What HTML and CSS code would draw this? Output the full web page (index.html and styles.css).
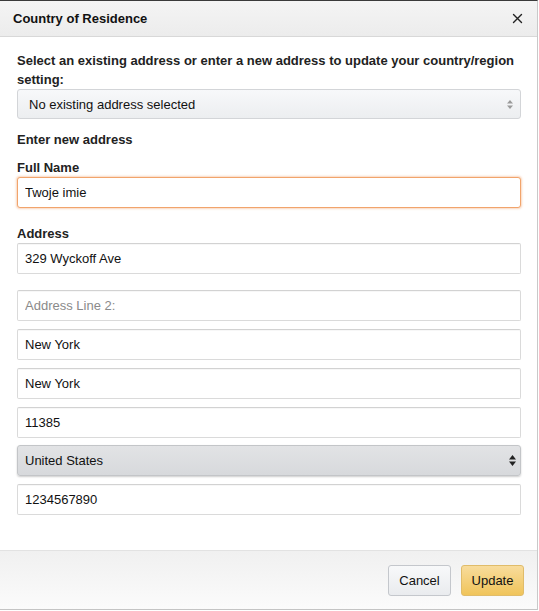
FILE: index.html
```html
<!DOCTYPE html>
<html lang="en">
<head>
    <meta charset="UTF-8">
    <meta name="viewport" content="width=device-width, initial-scale=1.0">
    <title>Country of Residence</title>
    <link rel="stylesheet" href="styles.css">
</head>
<body>
    <div class="dialog">
        <header class="dialog-header">
            <h1>Country of Residence</h1>
            <button type="button" class="close" aria-label="Close">
                <svg width="11" height="11" viewBox="0 0 11 11"><path d="M1.5 1.5L9.5 9.5M9.5 1.5L1.5 9.5" stroke="#222" stroke-width="1.4" stroke-linecap="round"/></svg>
            </button>
        </header>

        <form class="dialog-body" id="addressForm">
            <label class="lead" for="existing">Select an existing address or enter a new address to update your country/region setting:</label>
            <div class="select-wrap">
                <select id="existing" class="select">
                    <option>No existing address selected</option>
                </select>
                <svg class="arrows light" width="6" height="9" viewBox="0 0 6 9"><path d="M3 0L6 3.5H0Z M3 9L0 5.5H6Z" fill="#9a9a9a"/></svg>
            </div>

            <div class="section">Enter new address</div>

            <label class="field-label" for="name">Full Name</label>
            <input type="text" id="name" class="input focused" value="Twoje imie">

            <label class="field-label spaced" for="address1">Address</label>
            <input type="text" id="address1" class="input" value="329 Wyckoff Ave">
            <input type="text" class="input gap-lg" placeholder="Address Line 2:">
            <input type="text" class="input" value="New York">
            <input type="text" class="input" value="New York">
            <input type="text" class="input" value="11385">
            <div class="select-wrap country">
                <select class="select dark">
                    <option>United States</option>
                </select>
                <svg class="arrows" width="7" height="11" viewBox="0 0 7 11"><path d="M3.5 0L7 4.5H0Z M3.5 11L0 6.5H7Z" fill="#222"/></svg>
            </div>
            <input type="text" class="input" value="1234567890">
        </form>

        <footer class="dialog-footer">
            <button type="button" class="btn">Cancel</button>
            <button type="submit" form="addressForm" class="btn primary">Update</button>
        </footer>
    </div>
</body>
</html>
```

FILE: styles.css
```css
* {
    box-sizing: border-box;
}
body {
    margin: 0;
    background: #fff;
    font-family: "Liberation Sans", Arial, sans-serif;
    font-size: 13px;
    color: #111;
}
.dialog {
    display: flex;
    flex-direction: column;
    width: 538px;
    height: 610px;
    border-top: 1px solid #3a3a3a;
    border-right: 1px solid #c9c9c9;
    border-bottom: 1px solid #c4c4c4;
    background: #fff;
}
.dialog-header {
    display: flex;
    align-items: center;
    justify-content: space-between;
    height: 36px;
    padding: 0 13px;
    background: linear-gradient(#f4f4f4, #ececec);
    border-bottom: 1px solid #d8d8d8;
}
.dialog-header h1 {
    margin: 0;
    font-size: 13px;
    font-weight: bold;
    color: #111;
}
.close {
    display: flex;
    padding: 0;
    margin-right: 1px;
    border: none;
    background: none;
}
.dialog-body {
    flex: 1;
    display: flex;
    flex-direction: column;
    padding: 14px 16px 0 17px;
}
.lead, .section, .field-label {
    font-weight: bold;
    line-height: 19px;
    color: #222;
}
.section {
    margin-top: 11px;
}
.field-label {
    margin-top: 10px;
    line-height: 18px;
}
.field-label.spaced {
    margin-top: 17px;
}
.select-wrap {
    position: relative;
}
.select {
    appearance: none;
    -webkit-appearance: none;
    width: 100%;
    height: 30px;
    padding: 0 24px 0 11px;
    border: 1px solid #d3d5d8;
    border-radius: 3px;
    background: linear-gradient(#f7f8fa, #eceef0);
    font-family: inherit;
    font-size: 13px;
    color: #111;
}
.select.dark {
    height: 31px;
    padding-left: 7px;
    border-color: #c3c5c8;
    background: linear-gradient(#e2e3e5, #d7d9dc);
    box-shadow: 0 1px 2px rgba(0, 0, 0, 0.2);
}
.country {
    margin-top: 7px;
}
.arrows {
    position: absolute;
    right: 8px;
    top: 11px;
}
.country .arrows {
    right: 5px;
    top: 10px;
}
.input {
    width: 100%;
    height: 31px;
    margin-top: 8px;
    padding: 0 7px;
    border: 1px solid #dadada;
    border-top-color: #d2d2d2;
    border-radius: 2px;
    box-shadow: inset 0 1px 0 rgba(0, 0, 0, 0.03);
    font-family: inherit;
    font-size: 13px;
    color: #111;
    background: #fff;
}
.field-label + .input {
    margin-top: 0;
}
.input::placeholder {
    color: #8a8a8a;
}
.input.gap-lg {
    margin-top: 16px;
}
.input.focused {
    border-color: #f1a46c;
    border-radius: 3px;
    box-shadow: 0 0 2px 1px rgba(241, 164, 108, 0.45);
}
.dialog-footer {
    display: flex;
    justify-content: flex-end;
    align-items: center;
    gap: 10px;
    height: 59px;
    padding: 1px 13px 0;
    border-top: 1px solid #e2e2e2;
    background: linear-gradient(#f0f0f0, #fbfbfb);
}
.btn {
    width: 63px;
    height: 31px;
    padding: 0;
    border: 1px solid #c4c7cc;
    border-radius: 3px;
    background: linear-gradient(#f8f9fa, #e9ebee);
    font-family: inherit;
    font-size: 13px;
    color: #111;
}
.btn.primary {
    border-color: #e0bc6a;
    background: linear-gradient(#f8dc9c, #f0c45a);
}
```
